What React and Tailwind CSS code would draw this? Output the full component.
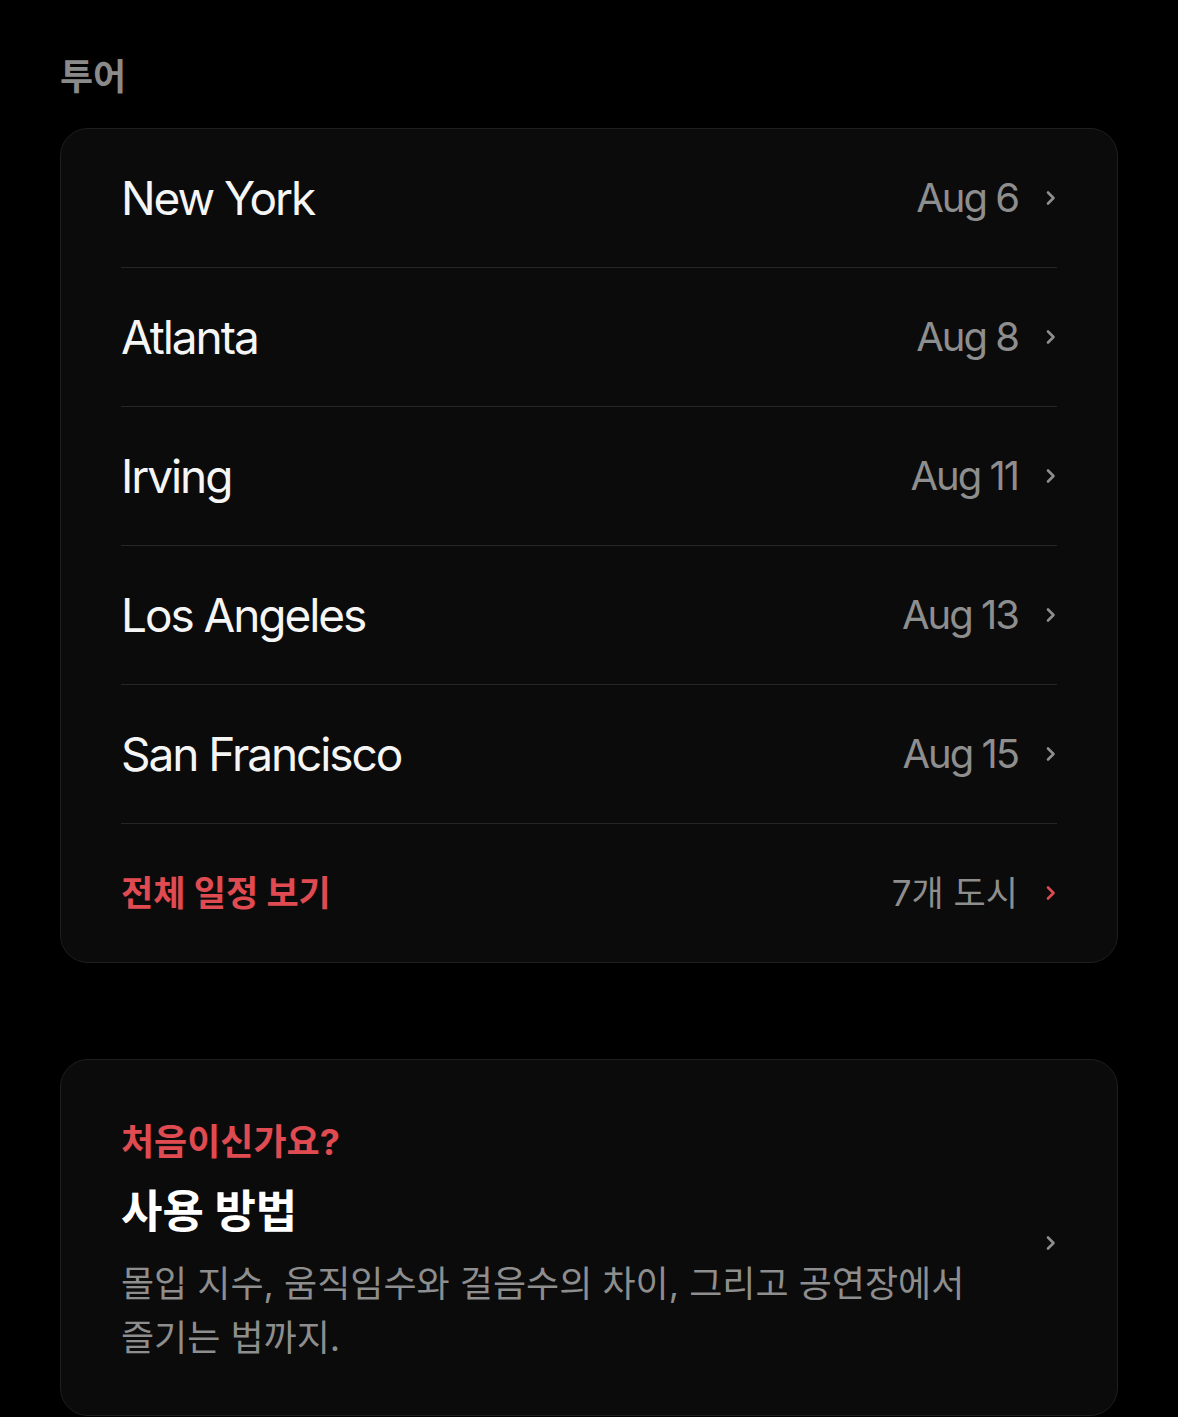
import React from "react";

const tours = [
  { city: "New York", date: "Aug 6" },
  { city: "Atlanta", date: "Aug 8" },
  { city: "Irving", date: "Aug 11" },
  { city: "Los Angeles", date: "Aug 13" },
  { city: "San Francisco", date: "Aug 15" },
];

const Chevron = ({ className }) => (
  <svg viewBox="0 0 12 16" className={className} fill="none">
    <path d="M3 2.5l5.5 5.5L3 13.5" stroke="currentColor" strokeWidth="2.6" strokeLinecap="round" strokeLinejoin="round" />
  </svg>
);

const App = () => {
  return (
    <div className="min-h-[1417px] bg-black px-[60px] pt-[55px] pb-10 font-['Inter','Noto_Sans_CJK_KR',sans-serif] antialiased">
      {/* Section title */}
      <h1 className="text-[36px] leading-[44px] font-semibold text-[#8a8a8a]">투어</h1>

      {/* Tour list */}
      <div className="mt-[29px] rounded-[28px] border border-[#1f1f1f] bg-[#0b0b0b] px-[60px]">
        {tours.map((t) => (
          <div
            key={t.city}
            className="flex h-[139px] items-center justify-between border-b border-[#262626]"
          >
            <span className="text-[46px] text-[#f5f5f5] tracking-[-0.045em]">{t.city}</span>
            <div className="flex items-center gap-[27px]">
              <span className="text-[40px] text-[#8e8e8e] tracking-[-0.05em]">{t.date}</span>
              <Chevron className="h-[16px] w-[12px] text-[#8e8e8e]" />
            </div>
          </div>
        ))}
        <div className="flex h-[138px] items-center justify-between">
          <span className="text-[35px] font-bold text-[#e04b52]">전체 일정 보기</span>
          <div className="flex items-center gap-[27px]">
            <span className="text-[35px] text-[#8e8e8e]">7개 도시</span>
            <Chevron className="h-[16px] w-[12px] text-[#e04b52]" />
          </div>
        </div>
      </div>

      {/* How to use */}
      <div className="mt-[96px] flex items-center justify-between rounded-[28px] border border-[#1f1f1f] bg-[#0b0b0b] px-[60px] pt-[60px] pb-[50px]">
        <div className="max-w-[900px]">
          <p className="text-[36px] leading-[44px] font-bold text-[#e04b52]">처음이신가요?</p>
          <h2 className="mt-[20px] text-[45px] leading-[56px] font-bold text-white">사용 방법</h2>
          <p className="mt-[17px] break-keep text-[36px] leading-[54px] text-[#8e8e8e]">
            몰입 지수, 움직임수와 걸음수의 차이, 그리고 공연장에서 즐기는 법까지.
          </p>
        </div>
        <Chevron className="h-[16px] w-[12px] shrink-0 text-[#8e8e8e]" />
      </div>
    </div>
  );
};

export default App;
